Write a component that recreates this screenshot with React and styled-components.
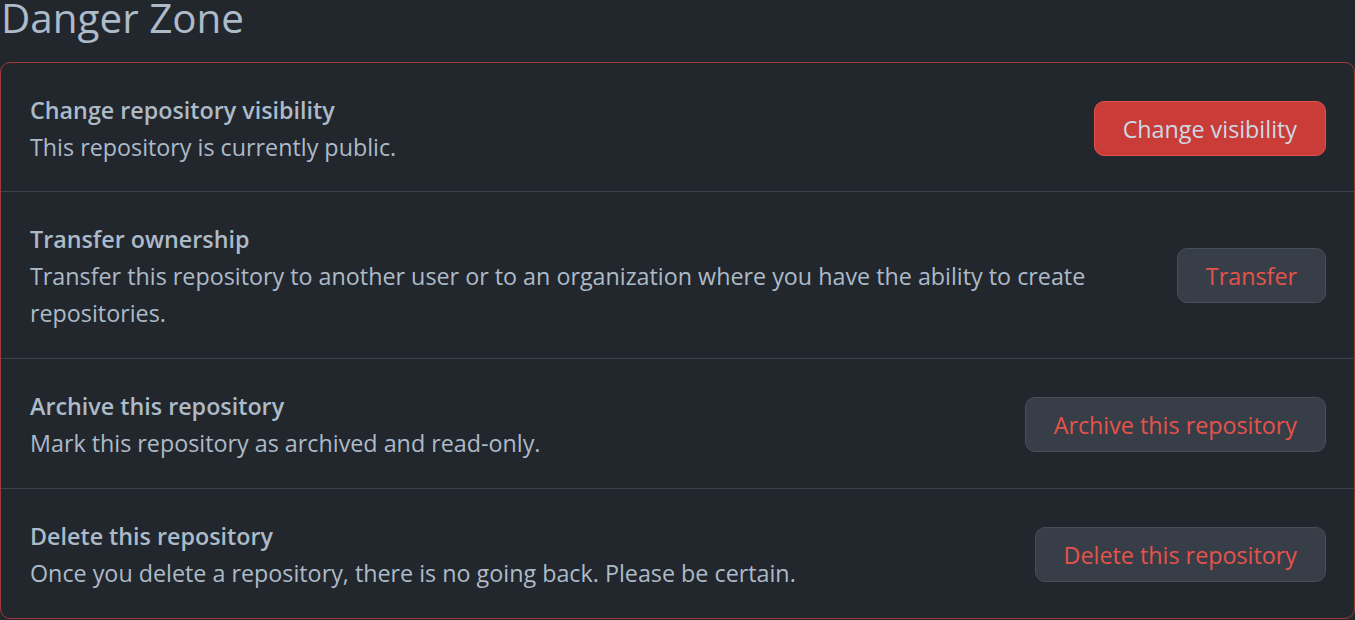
import React from "react";
import styled, { createGlobalStyle } from "styled-components";

const Global = createGlobalStyle`
  html, body { margin: 0; padding: 0; background: #22272e; }
  body { font-family: "Open Sans", "Noto Sans", sans-serif; color: #adbac7; }
  * { box-sizing: border-box; }
`;

const Page = styled.div`
  width: 1355px;
  height: 620px;
  overflow: hidden;
  background: #22272e;
`;

const Heading = styled.h2`
  margin: 0 0 26px 0;
  font-size: 40.4px;
  font-weight: 400;
  line-height: 36px;
  padding-left: 1px;
  color: #adbac7;
`;

const Box = styled.div`
  border: 1px solid #9e3a3a;
  border-radius: 10px;
  background: #22272e;
`;

const Row = styled.div`
  display: flex;
  align-items: center;
  gap: 24px;
  padding: 29px 28px ${(p) => (p.$first ? "25px" : "26px")} 29px;
  border-top: ${(p) => (p.$first ? "none" : "1px solid #3b424c")};
`;

const Text = styled.div`
  flex: 1 1 auto;
  min-width: 0;
`;

const Title = styled.div`
  font-size: 23.3px;
  font-weight: 600;
  line-height: 37px;
  color: #adbac7;
`;

const Desc = styled.div`
  font-size: 23.3px;
  line-height: 37px;
  color: #adbac7;
  max-width: 1100px;
`;

const Button = styled.button`
  flex: 0 0 auto;
  height: 55px;
  margin-top: -2px;
  padding: 3px 28px 0;
  border-radius: 10px;
  font-family: inherit;
  font-size: 23.3px;
  line-height: 1;
  cursor: pointer;
  border: 1px solid ${(p) => (p.$primary ? "#e0524a" : "#464e58")};
  background: ${(p) => (p.$primary ? "#c93c37" : "#373e47")};
  color: ${(p) => (p.$primary ? "#cdd9e5" : "#e5534b")};
`;

const items = [
  {
    title: "Change repository visibility",
    desc: "This repository is currently public.",
    button: "Change visibility",
    primary: true,
  },
  {
    title: "Transfer ownership",
    desc: "Transfer this repository to another user or to an organization where you have the ability to create repositories.",
    button: "Transfer",
  },
  {
    title: "Archive this repository",
    desc: "Mark this repository as archived and read-only.",
    button: "Archive this repository",
  },
  {
    title: "Delete this repository",
    desc: "Once you delete a repository, there is no going back. Please be certain.",
    button: "Delete this repository",
  },
];

export default function App() {
  return (
    <Page>
      <Global />
      <Heading>Danger Zone</Heading>
      <Box>
        {items.map((it, i) => (
          <Row key={it.title} $first={i === 0}>
            <Text>
              <Title>{it.title}</Title>
              <Desc>{it.desc}</Desc>
            </Text>
            <Button $primary={it.primary}>{it.button}</Button>
          </Row>
        ))}
      </Box>
    </Page>
  );
}
